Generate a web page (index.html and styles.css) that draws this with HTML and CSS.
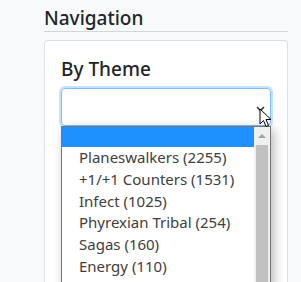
FILE: index.html
```html
<!DOCTYPE html>
<html lang="en">
<head>
    <meta charset="UTF-8">
    <title>Navigation</title>
    <link rel="stylesheet" href="styles.css">
</head>
<body>
<div class="sidebar">
    <h5 class="nav-title">Navigation</h5>
    <div class="card">
        <h5 class="card-title">By Theme</h5>
        <div class="picker">
            <div class="select">
                <svg class="chevron" width="9" height="6" viewBox="0 0 9 6">
                    <path d="M1 1 L4.5 4.5 L8 1" fill="none" stroke="#343a40" stroke-width="1.6"/>
                </svg>
            </div>
            <div class="dropdown">
                <ul class="options">
                    <li class="active">&nbsp;</li>
                    <li>Planeswalkers (2255)</li>
                    <li>+1/+1 Counters (1531)</li>
                    <li>Infect (1025)</li>
                    <li>Phyrexian Tribal (254)</li>
                    <li>Sagas (160)</li>
                    <li>Energy (110)</li>
                </ul>
                <div class="scrollbar">
                    <div class="arrow"></div>
                    <div class="thumb"></div>
                </div>
            </div>
            <svg class="cursor" width="14" height="21" viewBox="0 0 14 21">
                <path d="M1 1 L1 16 L4.5 12.5 L7 18.5 L9.5 17.5 L7 11.5 L12 11.5 Z" fill="#fff" stroke="#000" stroke-width="1" stroke-linejoin="round"/>
            </svg>
        </div>
        <div class="spacer"></div>
    </div>
</div>
</body>
</html>
```

FILE: styles.css
```css
* {
    margin: 0;
    padding: 0;
    box-sizing: border-box;
}

html, body {
    height: 100%;
    overflow: hidden;
}

body {
    background: #f8f9fa;
    font-family: "Noto Sans", "Open Sans", sans-serif;
    color: #212529;
}

ul {
    list-style: none;
}

.sidebar {
    width: 244px;
    margin-left: 44px;
    padding-top: 7px;
}

.nav-title {
    font-size: 19px;
    font-weight: 500;
    line-height: 23px;
    padding-bottom: 1px;
    border-bottom: 1px solid #d3d6d9;
}

.card {
    margin-top: 8px;
    background: #fff;
    border: 1px solid rgba(0, 0, 0, .125);
    border-radius: 4px;
    padding: 16px 16px 0;
}

.card-title {
    font-size: 19px;
    font-weight: 500;
    line-height: 24px;
    margin-bottom: 7px;
}

.picker {
    position: relative;
}

.select {
    height: 38px;
    border: 1px solid #80bdff;
    border-radius: 4px;
    box-shadow: 0 0 0 2px rgba(0, 123, 255, .22);
    display: flex;
    align-items: center;
    justify-content: flex-end;
    padding-right: 5px;
}

.chevron {
    margin-top: 4px;
}

.dropdown {
    position: absolute;
    top: 38px;
    left: 0;
    right: 0;
    height: 200px;
    background: #fff;
    border: 1px solid #767676;
    box-shadow: 3px 3px 10px rgba(0, 0, 0, .28);
    display: flex;
}

.options {
    flex: 1;
    font-size: 15px;
    line-height: 21.8px;
    color: #404040;
}

.options li {
    padding-left: 17px;
    white-space: nowrap;
}

.options li.active {
    background: #1e90ff;
    height: 20px;
}

.scrollbar {
    width: 16px;
    background: #f0f0f0;
    display: flex;
    flex-direction: column;
    align-items: center;
}

.arrow {
    margin-top: 7px;
    width: 0;
    height: 0;
    border-left: 4px solid transparent;
    border-right: 4px solid transparent;
    border-bottom: 4px solid #a3a3a3;
}

.thumb {
    margin-top: 7px;
    width: 12px;
    flex: 1;
    background: #c1c1c1;
}

.cursor {
    position: absolute;
    top: 20px;
    right: -2px;
}

.spacer {
    height: 220px;
}
```
